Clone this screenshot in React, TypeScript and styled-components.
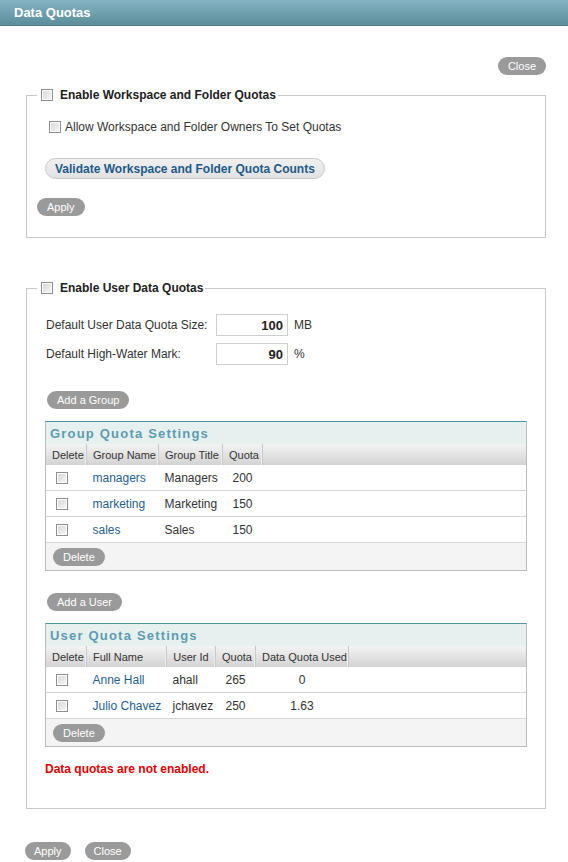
import styled, { createGlobalStyle } from 'styled-components';

const GlobalStyle = createGlobalStyle`
  body {
    margin: 0;
    background: #fff;
    font-family: 'Liberation Sans', Arial, sans-serif;
    font-size: 12px;
    color: #333;
  }
`;

const Header = styled.div`
  height: 26px;
  padding-left: 14px;
  display: flex;
  align-items: center;
  background: linear-gradient(#84b4c3, #5c8d9a);
  border-bottom: 1px solid #557f8b;
  box-sizing: border-box;
  color: #fff;
  font-weight: bold;
  font-size: 13px;
`;

const Body = styled.div`
  padding: 0 22px 0 26px;
`;

const TopBar = styled.div`
  display: flex;
  justify-content: flex-end;
  margin-top: 31px;
`;

const PillButton = styled.button<{ $small?: boolean }>`
  height: 18px;
  padding: 0 ${(p) => (p.$small ? 9 : 10)}px;
  border: none;
  border-radius: 9px;
  background: #9a9a9a;
  color: #fff;
  font-family: 'Liberation Sans', Arial, sans-serif;
  font-size: 11px;
  line-height: 18px;
  cursor: pointer;
`;

const Fieldset = styled.fieldset<{ $top: number; $height: number }>`
  margin: ${(p) => p.$top}px 0 0;
  padding: 0 0 0 10px;
  border: 1px solid #c9c9c9;
  height: ${(p) => p.$height}px;
  box-sizing: border-box;
  min-width: 0;
`;

const Legend = styled.legend`
  display: flex;
  align-items: center;
  gap: 7px;
  padding: 0 2px 0 4px;
  font-weight: bold;
  font-size: 12px;
  color: #222;
  line-height: 14px;
`;

const Check = styled.input.attrs({ type: 'checkbox' })`
  appearance: none;
  display: block;
  margin: 0;
  width: 12px;
  height: 12px;
  flex: none;
  border: 1px solid #8f8f8f;
  box-sizing: border-box;
  background: linear-gradient(135deg, #d8d8d8, #f6f6f6);
  box-shadow: inset 0 0 0 1px #fff;
`;

const CheckRow = styled.label`
  display: flex;
  align-items: center;
  gap: 4px;
  margin: 18px 0 0 12px;
  font-size: 12px;
  color: #333;
`;

const ValidateButton = styled.button`
  display: block;
  margin: 24px 0 0 8px;
  height: 21px;
  padding: 0 9px;
  border: 1px solid #c8c8c8;
  border-radius: 11px;
  background: linear-gradient(#f0f0f0, #e2e2e2);
  color: #1d5a88;
  font-family: 'Liberation Sans', Arial, sans-serif;
  font-size: 12px;
  font-weight: bold;
  cursor: pointer;
`;

const Spaced = styled.div<{ $top: number; $left: number }>`
  margin: ${(p) => p.$top}px 0 0 ${(p) => p.$left}px;
`;

const FormGrid = styled.div`
  display: grid;
  grid-template-columns: 164px 72px auto;
  column-gap: 6px;
  row-gap: 7px;
  align-items: center;
  margin: 19px 0 0 9px;
`;

const NumberBox = styled.div`
  height: 22px;
  box-sizing: border-box;
  border: 1px solid #cfcfcf;
  padding-right: 4px;
  display: flex;
  align-items: center;
  justify-content: flex-end;
  font-size: 13px;
  font-weight: bold;
  color: #222;
`;

const QuotaTable = styled.div<{ $top: number }>`
  margin: ${(p) => p.$top}px 0 0 8px;
  width: 482px;
  border: 1px solid #bcbcbc;
  border-top-color: #4f93a9;
  box-sizing: border-box;
`;

const TableTitle = styled.div`
  height: 22px;
  padding-left: 4px;
  display: flex;
  align-items: center;
  background: #e6f0ee;
  color: #5c9cb1;
  font-size: 13px;
  font-weight: bold;
  letter-spacing: 1.2px;
`;

const Grid = styled.table`
  width: 100%;
  border-collapse: collapse;
  table-layout: fixed;
`;

// $w is the full column width, border and padding included
const Th = styled.th<{ $w?: number; $center?: boolean }>`
  width: ${(p) => (p.$w ? `${p.$w - (p.$center ? 1 : 7)}px` : 'auto')};
  height: 21px;
  padding: 0 0 0 ${(p) => (p.$center ? 0 : 6)}px;
  background: linear-gradient(#f3f3f3, #d3d3d3);
  border-right: ${(p) => (p.$w ? '1px solid #c9c9c9' : 'none')};
  box-shadow: ${(p) => (p.$w ? 'inset -1px 0 0 #ededed' : 'none')};
  font-weight: normal;
  font-size: 11px;
  color: #333;
  text-align: ${(p) => (p.$center ? 'center' : 'left')};
  white-space: nowrap;
  overflow: hidden;
`;

const Td = styled.td<{ $align?: string; $link?: boolean }>`
  height: 25px;
  padding: 0 0 0 ${(p) => (p.$align === 'center' ? 0 : 6)}px;
  border-bottom: 1px solid #d6d6d6;
  text-align: ${(p) => p.$align || 'left'};
  vertical-align: middle;
  color: ${(p) => (p.$link ? '#1f5f8f' : '#333')};
  font-size: 12px;
  white-space: nowrap;
`;

const CheckCell = styled.td`
  height: 25px;
  padding: 0 0 0 10px;
  border-bottom: 1px solid #d6d6d6;
  vertical-align: middle;
`;

const TableFooter = styled.div`
  height: 27px;
  padding-left: 7px;
  display: flex;
  align-items: center;
  background: #f4f4f4;
`;

const ErrorText = styled.div`
  margin: 15px 0 0 8px;
  color: #e60000;
  font-weight: bold;
  font-size: 12px;
`;

const BottomBar = styled.div`
  display: flex;
  gap: 14px;
  margin: 33px 0 0 -1px;
`;

const groups = [
  { name: 'managers', title: 'Managers', quota: '200' },
  { name: 'marketing', title: 'Marketing', quota: '150' },
  { name: 'sales', title: 'Sales', quota: '150' },
];

const users = [
  { name: 'Anne Hall', id: 'ahall', quota: '265', used: '0' },
  { name: 'Julio Chavez', id: 'jchavez', quota: '250', used: '1.63' },
];

export default function App() {
  return (
    <>
      <GlobalStyle />
      <Header>Data Quotas</Header>
      <Body>
        <TopBar>
          <PillButton>Close</PillButton>
        </TopBar>

        <Fieldset $top={13} $height={150}>
          <Legend>
            <Check />
            Enable Workspace and Folder Quotas
          </Legend>
          <CheckRow>
            <Check />
            Allow Workspace and Folder Owners To Set Quotas
          </CheckRow>
          <ValidateButton>Validate Workspace and Folder Quota Counts</ValidateButton>
          <Spaced $top={19} $left={0}>
            <PillButton>Apply</PillButton>
          </Spaced>
        </Fieldset>

        <Fieldset $top={43} $height={528}>
          <Legend>
            <Check />
            Enable User Data Quotas
          </Legend>
          <FormGrid>
            <span>Default User Data Quota Size:</span>
            <NumberBox>100</NumberBox>
            <span>MB</span>
            <span>Default High-Water Mark:</span>
            <NumberBox>90</NumberBox>
            <span>%</span>
          </FormGrid>

          <Spaced $top={26} $left={10}>
            <PillButton>Add a Group</PillButton>
          </Spaced>
          <QuotaTable $top={12}>
            <TableTitle>Group Quota Settings</TableTitle>
            <Grid>
              <thead>
                <tr>
                  <Th $w={41}>Delete</Th>
                  <Th $w={72}>Group Name</Th>
                  <Th $w={64}>Group Title</Th>
                  <Th $w={40}>Quota</Th>
                  <Th />
                </tr>
              </thead>
              <tbody>
                {groups.map((g) => (
                  <tr key={g.name}>
                    <CheckCell>
                      <Check />
                    </CheckCell>
                    <Td $link>{g.name}</Td>
                    <Td>{g.title}</Td>
                    <Td $align="center">{g.quota}</Td>
                    <Td />
                  </tr>
                ))}
              </tbody>
            </Grid>
            <TableFooter>
              <PillButton>Delete</PillButton>
            </TableFooter>
          </QuotaTable>

          <Spaced $top={22} $left={10}>
            <PillButton>Add a User</PillButton>
          </Spaced>
          <QuotaTable $top={12}>
            <TableTitle>User Quota Settings</TableTitle>
            <Grid>
              <thead>
                <tr>
                  <Th $w={41}>Delete</Th>
                  <Th $w={80}>Full Name</Th>
                  <Th $w={49} $center>User Id</Th>
                  <Th $w={40}>Quota</Th>
                  <Th $w={93}>Data Quota Used</Th>
                  <Th />
                </tr>
              </thead>
              <tbody>
                {users.map((u) => (
                  <tr key={u.id}>
                    <CheckCell>
                      <Check />
                    </CheckCell>
                    <Td $link>{u.name}</Td>
                    <Td>{u.id}</Td>
                    <Td $align="center">{u.quota}</Td>
                    <Td $align="center">{u.used}</Td>
                    <Td />
                  </tr>
                ))}
              </tbody>
            </Grid>
            <TableFooter>
              <PillButton>Delete</PillButton>
            </TableFooter>
          </QuotaTable>
          <ErrorText>Data quotas are not enabled.</ErrorText>
        </Fieldset>

        <BottomBar>
          <PillButton $small>Apply</PillButton>
          <PillButton $small>Close</PillButton>
        </BottomBar>
      </Body>
    </>
  );
}
